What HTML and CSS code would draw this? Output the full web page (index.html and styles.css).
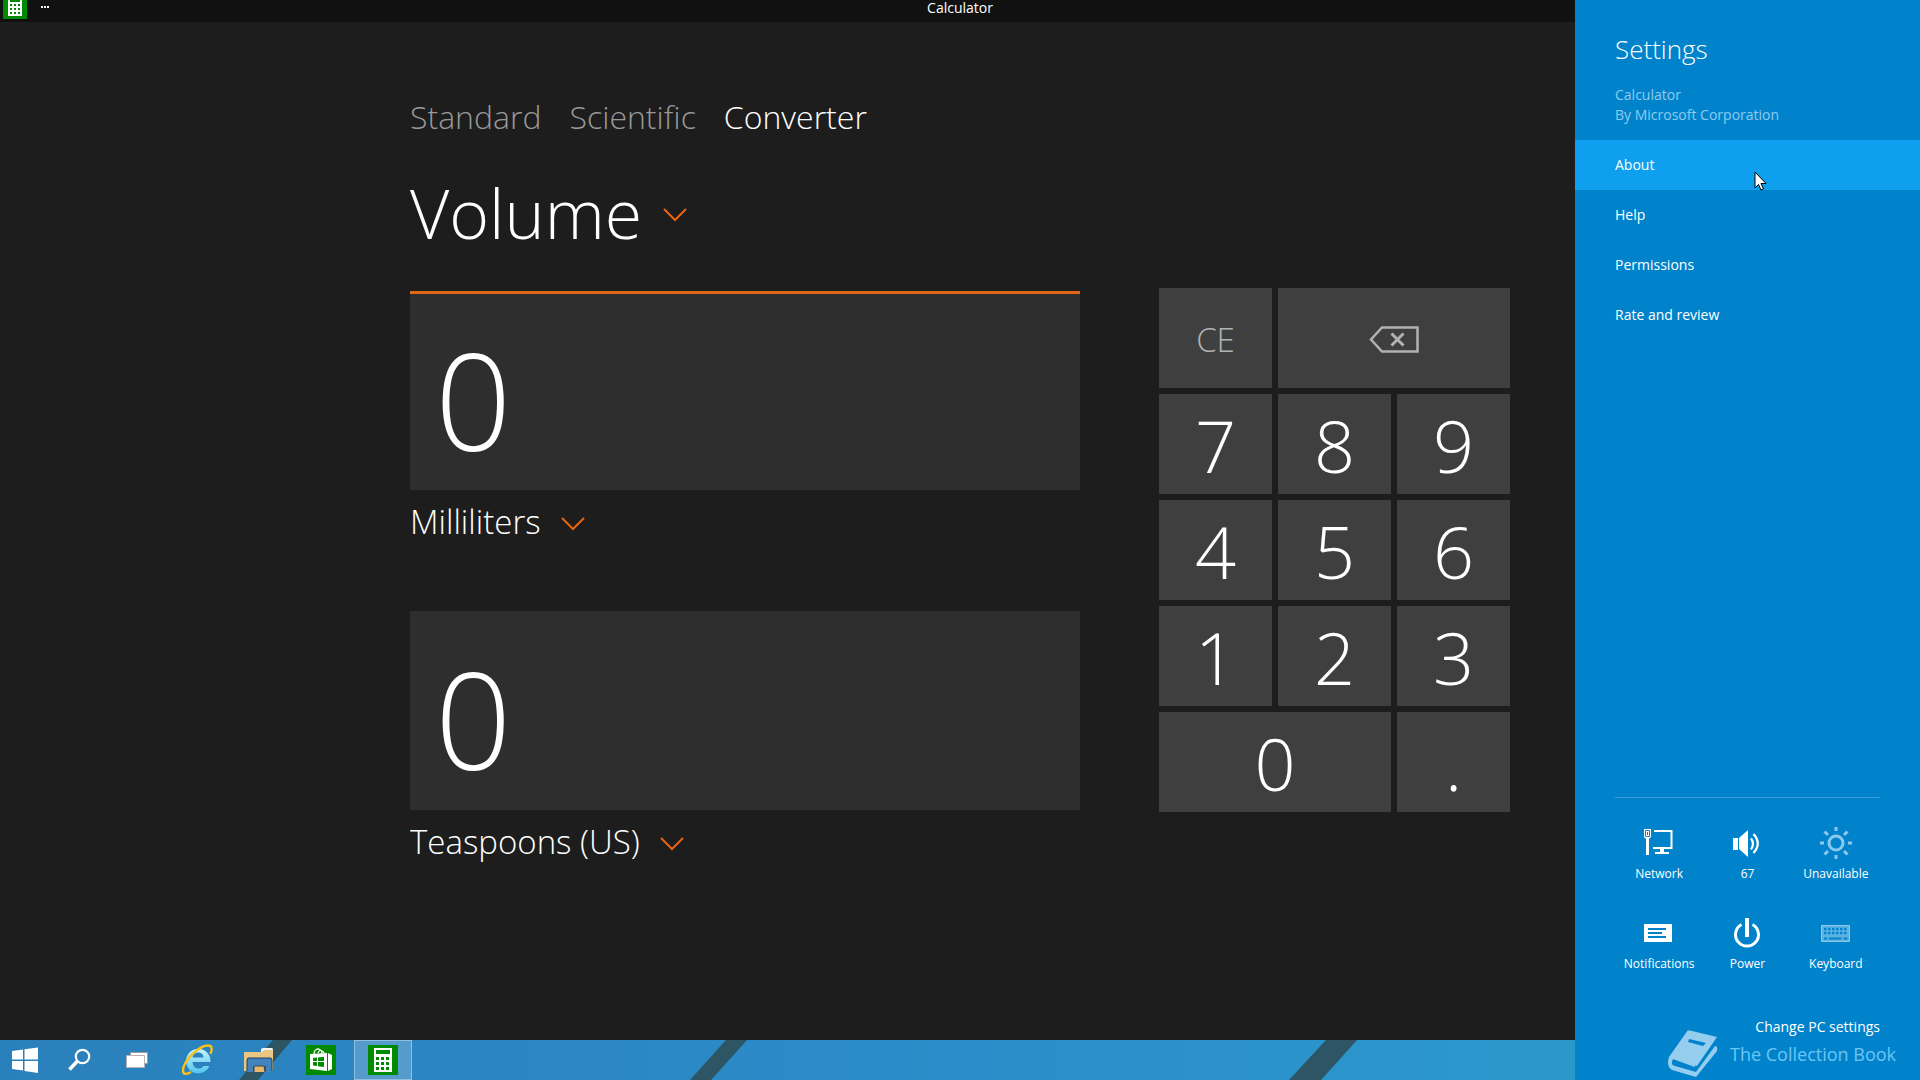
FILE: index.html
```html
<!DOCTYPE html>
<html lang="en">
<head>
<meta charset="utf-8">
<meta name="viewport" content="width=device-width, initial-scale=1">
<title>Calculator</title>
<link rel="stylesheet" href="styles.css">
</head>
<body>
<div class="desktop">
  <header class="titlebar">
    <div class="titlebar-left">
      <svg class="app-icon" width="24" height="19" viewBox="0 0 24 19" aria-hidden="true">
        <rect width="24" height="19" fill="#008a00"/>
        <path d="M5 0h14v16H5z" fill="#fff"/>
        <path d="M7 0h10v2H7zM7 4h2v2H7zM11 4h2v2h-2zM15 4h2v2h-2zM7 8h2v2H7zM11 8h2v2h-2zM15 8h2v2h-2zM7 12h2v2H7zM11 12h2v2h-2zM15 12h2v2h-2z" fill="#008a00"/>
      </svg>
      <button class="more" type="button" aria-label="App commands">
        <svg width="8" height="2" viewBox="0 0 8 2"><path d="M0 0h2v2H0zM3 0h2v2H3zM6 0h2v2H6z" fill="#fff"/></svg>
      </button>
    </div>
    <h1 class="titlebar-title">Calculator</h1>
  </header>

  <main class="converter">
    <div class="converter-inner">
      <nav class="tabs">
        <button class="tab" type="button">Standard</button>
        <button class="tab" type="button">Scientific</button>
        <button class="tab tab-active" type="button">Converter</button>
      </nav>
      <div class="picker picker-large">
        <select class="picker-select" aria-label="Measurement"><option>Volume</option></select>
        <svg class="chevron" width="24" height="14" viewBox="0 0 24 14"><path d="M1 1l11 11L23 1" fill="none" stroke="#e8650e" stroke-width="2"/></svg>
      </div>
      <div class="work">
        <div class="fields">
          <section class="field">
            <input class="value value-active" type="text" value="0" aria-label="From value">
            <div class="picker">
              <select class="picker-select" aria-label="From unit"><option>Milliliters</option></select>
              <svg class="chevron" width="24" height="14" viewBox="0 0 24 14"><path d="M1 1l11 11L23 1" fill="none" stroke="#e8650e" stroke-width="2"/></svg>
            </div>
          </section>
          <section class="field">
            <input class="value" type="text" value="0" aria-label="To value">
            <div class="picker">
              <select class="picker-select" aria-label="To unit"><option>Teaspoons (US)</option></select>
              <svg class="chevron" width="24" height="14" viewBox="0 0 24 14"><path d="M1 1l11 11L23 1" fill="none" stroke="#e8650e" stroke-width="2"/></svg>
            </div>
          </section>
        </div>
        <div class="keypad">
          <button class="key key-clear" type="button">CE</button>
          <button class="key key-wide" type="button" aria-label="Backspace">
            <svg width="50" height="27" viewBox="0 0 50 27"><path d="M13 1.500H48.500V25.500H13L2 13.500z" fill="none" stroke="#b2b2b2" stroke-width="2.500"/><path d="M22.500 7.500l12 12M34.500 7.500l-12 12" stroke="#b2b2b2" stroke-width="3"/></svg>
          </button>
          <button class="key" type="button">7</button>
          <button class="key" type="button">8</button>
          <button class="key" type="button">9</button>
          <button class="key" type="button">4</button>
          <button class="key" type="button">5</button>
          <button class="key" type="button">6</button>
          <button class="key" type="button">1</button>
          <button class="key" type="button">2</button>
          <button class="key" type="button">3</button>
          <button class="key key-wide" type="button">0</button>
          <button class="key" type="button">.</button>
        </div>
      </div>
    </div>
  </main>

  <footer class="taskbar">
    <svg class="wallpaper" width="1920" height="40" viewBox="0 0 1920 40" aria-hidden="true">
      <path d="M273 0h19l-34 40h-19zM726 0h21l-36 40h-21zM1326 0h31l-36 40h-32z" fill="#2d5563"/>
    </svg>
    <nav class="tasks">
      <button class="task task-start" type="button" aria-label="Start">
        <svg width="28" height="26" viewBox="0 0 28 26"><path d="M1 4l11-1.500V12.500H1zM13.500 2.300L27 .5v12H13.500zM1 14h11v9.500L1 22zM13.500 14H27v12l-13.500-2z" fill="#fff"/></svg>
      </button>
      <button class="task" type="button" aria-label="Search">
        <svg width="24" height="24" viewBox="0 0 24 24"><circle cx="15.500" cy="8.500" r="6.700" fill="none" stroke="#fff" stroke-width="2.200"/><path d="M10.500 13L2.500 21.500" stroke="#fff" stroke-width="3.600"/></svg>
      </button>
      <button class="task" type="button" aria-label="Task view">
        <svg width="24" height="18" viewBox="0 0 24 18"><path d="M5.500 1.500h17v11h-17z" fill="#fff" stroke="#9b9b9b"/><path d="M1.500 4.500h18v12h-18z" fill="#fff" stroke="#b4b4b4"/></svg>
      </button>
      <button class="task task-app" type="button" aria-label="Internet Explorer">
        <svg width="32" height="32" viewBox="0 0 32 32">
          <defs><linearGradient id="ie" x1="0" y1="0" x2="0" y2="1"><stop offset="0" stop-color="#c8f4ff"/><stop offset="1" stop-color="#52c3ee"/></linearGradient></defs>
          <path d="M28.500 22A12.300 12.300 0 1 1 29.500 18H11.500c.5 4.500 3 6.500 6 6.500 2 0 4-.8 5-2.500zM11.500 13.500h11c0-3-2.500-5-5.500-5s-5 2-5.500 5z" fill="url(#ie)"/>
          <path d="M29.500 10C31.500 4 31 1.500 27 1.500 18 1.500 2 17 2 26.500c0 4.500 4 4 8 1.500" fill="none" stroke="#f3c21b" stroke-width="2.400"/>
        </svg>
      </button>
      <button class="task task-app" type="button" aria-label="File Explorer">
        <svg width="30" height="26" viewBox="0 0 30 26">
          <path d="M17 5V2l2-1h9l1 1v8H17z" fill="#f4f4f2"/>
          <path d="M0 5h18l2-2h9v20l-1 1V13H4v11H0z" fill="#e9c684"/>
          <path d="M3 11h24l1 2v12h-6v-6H9v6H3z" fill="#4383bd"/>
          <path d="M3 24V13l1-2h23l1 2v11" fill="none" stroke="#213f5a"/>
          <path d="M10 25v-6h10l1 6" fill="#e9b66a" stroke="#34495a"/>
        </svg>
      </button>
      <button class="task task-app" type="button" aria-label="Store">
        <svg width="30" height="30" viewBox="0 0 30 30">
          <rect width="30" height="30" fill="#008a00"/>
          <path d="M4 9l17-1v18L4 24zM22 8l4 2v14l-4 2z" fill="#fff"/>
          <path d="M8 9c0-3 2-5 4-5s4 2 4 5M12 8c1-3 3-3 4-2s2 1 2 2" fill="none" stroke="#fff" stroke-width="1.300"/>
          <path d="M7 13l4-.5V16H7zM12 12.500l6-.8V16h-6zM7 17h4v4l-4-.5zM12 17h6v5l-6-.8z" fill="#008a00"/>
        </svg>
      </button>
      <button class="task task-current" type="button" aria-label="Calculator">
        <svg width="30" height="30" viewBox="0 0 30 30">
          <rect width="30" height="30" fill="#008a00"/>
          <path d="M6 3h18v24H6z" fill="#fff"/>
          <path d="M8 5h14v4H8zM8 12h3v3H8zM13 12h3v3h-3zM18 12h3v3h-3zM8 17h3v3H8zM13 17h3v3h-3zM18 17h3v3h-3zM8 22h3v3H8zM13 22h3v3h-3zM18 22h3v3h-3z" fill="#008a00"/>
        </svg>
      </button>
    </nav>
  </footer>

  <aside class="settings">
    <div class="settings-head">
      <h2 class="settings-title">Settings</h2>
      <p class="settings-app">Calculator<br>By Microsoft Corporation</p>
    </div>
    <nav class="links">
      <a class="link link-hover" href="#about">About
        <svg class="cursor" width="13" height="20" viewBox="0 0 13 20" aria-hidden="true"><path d="M1 1v16l3.500-3.500 2.500 5.500 2.500-1-2.500-5.500H12z" fill="#fff" stroke="#000"/></svg>
      </a>
      <a class="link" href="#help">Help</a>
      <a class="link" href="#permissions">Permissions</a>
      <a class="link" href="#rate">Rate and review</a>
    </nav>
    <div class="tiles">
      <button class="tile" type="button">
        <svg width="32" height="32" viewBox="0 0 32 32"><path d="M11 4H28.500V21H10" fill="none" stroke="#fff" stroke-width="2"/><path d="M17 21h4v4h5v2H12v-2h5z" fill="#fff"/><path d="M1 2h7v8l-2 2v16H3V12l-2-2z" fill="#fff"/><path d="M2.500 3.500h4v6h-4zM4.500 5v3" fill="none" stroke="#0083cb"/></svg>
        Network
      </button>
      <button class="tile" type="button">
        <svg width="32" height="32" viewBox="0 0 32 32"><path d="M2 11h5v12H2zM8 11l9-8v27l-9-8z" fill="#fff"/><path d="M20 11.500q4 5 0 11M22.500 7q8.500 9.500 0 19" fill="none" stroke="#fff" stroke-width="2.200"/></svg>
        67
      </button>
      <button class="tile" type="button" disabled>
        <svg width="32" height="32" viewBox="0 0 32 32" fill="none" stroke="#8cc8eb"><circle cx="16" cy="16" r="7" stroke-width="3"/><path d="M16 0v4M16 28v4M0 16h4M28 16h4M4.500 4.500l3.500 3.500M24 24l3.500 3.500M4.500 27.500L8 24M24 8l3.500-3.500" stroke-width="3"/></svg>
        Unavailable
      </button>
      <button class="tile" type="button">
        <svg width="32" height="32" viewBox="0 0 32 32"><path d="M1 7h28v18H1z" fill="#fff"/><path d="M5 12h18M5 16h14M5 20h18" stroke="#0083cb" stroke-width="2"/></svg>
        Notifications
      </button>
      <button class="tile" type="button">
        <svg width="32" height="32" viewBox="0 0 32 32" fill="none" stroke="#fff" stroke-width="3"><path d="M16 1v19" stroke-width="4"/><path d="M10.500 7.500a11.500 11.500 0 1 0 11 0"/></svg>
        Power
      </button>
      <button class="tile" type="button">
        <svg width="32" height="32" viewBox="0 0 32 32"><path d="M1.500 8.500h28v16h-28z" fill="#5fb1e0" stroke="#8cc8eb"/><path d="M4 12h23M4 16h23" stroke="#0083cb" stroke-width="2.500" stroke-dasharray="2.500 1.500"/><path d="M4 21.500h3M8.500 21.500h13M23.500 21.500h4" stroke="#0083cb" stroke-width="2"/></svg>
        Keyboard
      </button>
    </div>
    <div class="settings-foot">
      <a class="pc-settings" href="#pc">Change PC settings</a>
      <div class="brand">
        <svg width="50" height="48" viewBox="0 0 50 48" aria-hidden="true"><path d="M22 .5l27 6.500L29 36 5 28zM28 42l19-26q3 0 2 5L28 47 4 40Q-2 36 1 27l19-27 4 2L5 29q-3 6 2 7z" fill="#94cdee"/><path d="M5 28l22 8" stroke="#94cdee" stroke-width="2"/><path d="M21 9l17 4-3 3-15-4z" fill="#0083cb"/></svg>
        <span>The Collection Book</span>
      </div>
    </div>
  </aside>
</div>
</body>
</html>
```
FILE: styles.css
```css
* {
  box-sizing: border-box;
}

body {
  margin: 0;
  background: #1d1d1d;
  color: #fff;
  font-family: "Open Sans", "Noto Sans", sans-serif;
  font-size: 14px;
}

button,
select,
input {
  margin: 0;
  padding: 0;
  border: 0;
  border-radius: 0;
  background: none;
  color: inherit;
  font: inherit;
}

svg {
  display: block;
  flex: none;
}

.desktop {
  display: grid;
  grid-template-columns: minmax(0, 1fr) 345px;
  grid-template-rows: 22px 1fr 40px;
  min-height: 100vh;
}

/* Title bar */
.titlebar {
  grid-column: 1 / -1;
  grid-row: 1;
  display: grid;
  grid-template-columns: 1fr auto 1fr;
  padding: 0 3px;
  background: #111;
}

.titlebar-left {
  display: flex;
  gap: 14px;
}

.more {
  height: 14px;
}

.titlebar-title {
  margin: 0;
  font-size: 14px;
  font-weight: 400;
  line-height: 16px;
}

/* Converter */
.converter {
  grid-column: 1;
  grid-row: 2;
  display: flex;
  justify-content: flex-end;
  padding: 71px 65px 0 24px;
}

.converter-inner {
  width: 100%;
  max-width: 1100px;
}

.tabs {
  display: flex;
  gap: 28px;
  font-size: 32px;
  font-weight: 300;
  line-height: 48px;
}

.tab {
  color: #999;
}

.tab-active {
  color: #fff;
}

.picker {
  display: flex;
  align-items: center;
  gap: 20px;
  font-size: 33px;
  font-weight: 350;
  line-height: 48px;
}

.picker-select {
  appearance: none;
}

.chevron {
  margin-top: 4px;
}

.picker-large {
  margin: 16px 0 19px;
  font-size: 68px;
  font-weight: 300;
  line-height: 112px;
}

.work {
  display: grid;
  grid-template-columns: minmax(0, 1fr) 351px;
  align-items: start;
  gap: 79px;
}

.fields {
  display: grid;
  gap: 65px;
  padding-top: 3px;
}

.field {
  display: grid;
  gap: 8px;
}

.value {
  width: 100%;
  height: 199px;
  padding: 14px 25px 0;
  background: #2e2e2e;
  font-size: 134px;
  font-weight: 350;
}

.value-active {
  border-top: 3px solid #e06814;
}

.keypad {
  display: grid;
  grid-template-columns: repeat(3, 1fr);
  grid-auto-rows: 100px;
  gap: 6px;
}

.key {
  display: flex;
  align-items: center;
  justify-content: center;
  padding-top: 2px;
  background: #3f3f3f;
  font-size: 72px;
  font-weight: 300;
}

.key-clear {
  color: #b2b2b2;
  font-size: 33px;
}

.key-wide {
  grid-column: span 2;
}

/* Taskbar */
.taskbar {
  grid-column: 1 / -1;
  grid-row: 3;
  display: grid;
  overflow: hidden;
  background: linear-gradient(90deg, #2a80bb, #2b8bc8 45%, #2b98cc 80%);
}

.wallpaper,
.tasks {
  grid-area: 1 / 1;
}

.tasks {
  display: flex;
  z-index: 1;
}

.task {
  display: flex;
  align-items: center;
  justify-content: center;
  width: 58px;
}

.task-start {
  width: 50px;
}

.task-app {
  width: 62px;
}

.task-current {
  margin-left: 2px;
  border: 1px solid #8dbfe0;
  background: #559bcb;
}

/* Settings charm */
.settings {
  grid-column: 2;
  grid-row: 1 / -1;
  z-index: 2;
  display: flex;
  flex-direction: column;
  background: #0083cb;
}

.settings-head {
  padding: 31px 40px 15px;
}

.settings-title {
  margin: 0 0 18px;
  font-size: 26px;
  font-weight: 350;
  line-height: 36px;
}

.settings-app {
  margin: 0;
  color: #8fcbee;
  line-height: 20px;
}

.links {
  display: grid;
}

.link {
  position: relative;
  padding: 0 40px;
  color: #fff;
  line-height: 50px;
  text-decoration: none;
}

.link-hover {
  background: #0f9fef;
}

.cursor {
  position: absolute;
  top: 31px;
  left: 179px;
}

.tiles {
  display: grid;
  grid-template-columns: repeat(3, 1fr);
  gap: 34px 0;
  margin: auto 40px 0;
  padding-top: 29px;
  border-top: 1px solid #3a9fd8;
}

.tile {
  display: grid;
  justify-items: center;
  gap: 6px;
  font-size: 12px;
  line-height: 18px;
}

.tile:disabled {
  color: #fff;
}

.settings-foot {
  padding: 44px 24px 9px 40px;
}

.pc-settings {
  display: block;
  padding-right: 16px;
  color: #fff;
  line-height: 20px;
  text-align: right;
  text-decoration: none;
}

.brand {
  display: flex;
  align-items: center;
  justify-content: flex-end;
  gap: 12px;
  height: 34px;
  color: #6cc6f3;
  font-size: 18px;
}
```
